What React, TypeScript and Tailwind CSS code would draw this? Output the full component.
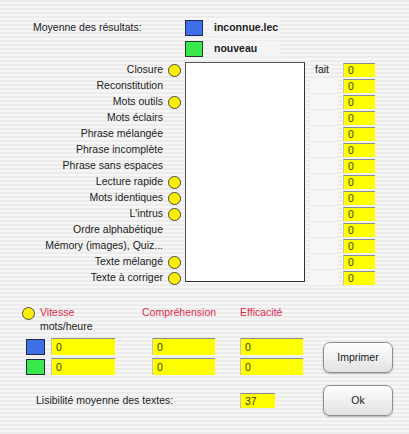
import React from "react";

const exercises: { name: string; dot: boolean }[] = [
  { name: "Closure", dot: true },
  { name: "Reconstitution", dot: false },
  { name: "Mots outils", dot: true },
  { name: "Mots éclairs", dot: false },
  { name: "Phrase mélangée", dot: false },
  { name: "Phrase incomplète", dot: false },
  { name: "Phrase sans espaces", dot: false },
  { name: "Lecture rapide", dot: true },
  { name: "Mots identiques", dot: true },
  { name: "L'intrus", dot: true },
  { name: "Ordre alphabétique", dot: false },
  { name: "Mémory (images), Quiz...", dot: false },
  { name: "Texte mélangé", dot: true },
  { name: "Texte à corriger", dot: true },
];

function Dot() {
  return (
    <span className="block w-[13px] h-[13px] rounded-full bg-[#ffee00] border border-[#4a4a4a]" />
  );
}

function Field({ value, w }: { value: string; w: string }) {
  return (
    <div
      className={`${w} h-full bg-[#ffff00] border-t border-t-[#8c8c8c] border-l border-l-[#c4c4c4] pl-[4px] flex items-center text-[#3a3a00] leading-none`}
    >
      {value}
    </div>
  );
}

function Swatch({ color }: { color: string }) {
  return <span className={`block w-[19px] h-[16px] border border-[#1e2a40] ${color}`} />;
}

function AquaButton({ label }: { label: string }) {
  return (
    <button className="w-[70px] h-[31px] rounded-[7px] border border-[#8e8e8e] bg-[linear-gradient(to_bottom,#ffffff,#f0f0f0_50%,#e2e2e2)] shadow-[0_1px_2px_rgba(0,0,0,0.25)] text-[#1a1a1a] text-[10.5px]">
      {label}
    </button>
  );
}

export default function App() {
  return (
    <div className="w-[409px] h-[434px] overflow-hidden bg-[image:repeating-linear-gradient(to_bottom,#ececec_0px,#ececec_2px,#f6f6f6_2px,#f6f6f6_4px)] font-['Liberation_Sans',Arial,sans-serif] text-[10.5px] text-[#222] pt-[20px]">
      {/* en-tête */}
      <div className="flex items-center h-[16px] pl-[33px]">
        <span className="w-[152px]">Moyenne des résultats:</span>
        <span className="block w-[18px] h-[16px] bg-[#3f6fe8] border border-[#1e2a50]" />
        <span className="ml-[6px] pl-[5px] w-[72px] h-[16px] flex items-center bg-[#f4f4f4] font-bold">
          inconnue.lec
        </span>
      </div>
      <div className="flex items-center h-[16px] pl-[185px] mt-[5px]">
        <span className="block w-[18px] h-[16px] bg-[#38e84c] border border-[#1e4020]" />
        <span className="ml-[6px] pl-[5px] w-[72px] h-[16px] flex items-center bg-[#f4f4f4] font-bold">
          nouveau
        </span>
      </div>

      {/* exercices */}
      <div className="flex mt-[5px]">
        <div className="w-[185px] flex flex-col">
          {exercises.map((e) => (
            <div key={e.name} className="h-[16px] flex items-center justify-end pr-[4px]">
              <span className="whitespace-nowrap">{e.name}</span>
              <span className="ml-[5px] w-[13px]">{e.dot && <Dot />}</span>
            </div>
          ))}
        </div>
        <div className="w-[120px] h-[220px] bg-white border border-[#555] border-r-[#333] border-b-[#333]" />
        <div className="w-[38px] flex flex-col">
          {exercises.map((e, i) => (
            <div key={e.name} className="h-[16px] flex items-center">
              {i === 0 ? (
                <span className="pl-[10px]">fait</span>
              ) : (
                <span className="block ml-[5px] w-[28px] h-[14px] bg-[#f7f7f7]" />
              )}
            </div>
          ))}
        </div>
        <div className="w-[32px] flex flex-col">
          {exercises.map((e) => (
            <div key={e.name} className="h-[16px] flex items-center">
              <div className="h-[14px]">
                <Field value="0" w="w-[32px]" />
              </div>
            </div>
          ))}
        </div>
      </div>

      {/* résultats */}
      <div className="flex mt-[20px]">
        <div className="w-[323px]">
          <div className="h-[14px] flex items-center pl-[22px] text-[#e0284a]">
            <span className="w-[18px]">
              <Dot />
            </span>
            <span className="w-[102px]">Vitesse</span>
            <span className="w-[98px]">Compréhension</span>
            <span>Efficacité</span>
          </div>
          <div className="h-[14px] flex items-center pl-[40px]">mots/heure</div>
          {["bg-[#3f6fe8]", "bg-[#38e84c]"].map((c, i) => (
            <div
              key={c}
              className={`h-[17px] flex items-center pl-[26px] ${i === 0 ? "mt-[4px]" : "mt-[3px]"}`}
            >
              <Swatch color={c} />
              <div className="ml-[6px] h-[17px]">
                <Field value="0" w="w-[64px]" />
              </div>
              <div className="ml-[37px] h-[17px]">
                <Field value="0" w="w-[63px]" />
              </div>
              <div className="ml-[25px] h-[17px]">
                <Field value="0" w="w-[63px]" />
              </div>
            </div>
          ))}
          <div className="h-[15px] flex items-center pl-[36px] mt-[18px]">
            <span className="w-[204px]">Lisibilité moyenne des textes:</span>
            <div className="h-[15px]">
              <Field value="37" w="w-[35px]" />
            </div>
          </div>
        </div>
        <div className="flex flex-col gap-[12px] pt-[36px]">
          <AquaButton label="Imprimer" />
          <AquaButton label="Ok" />
        </div>
      </div>
    </div>
  );
}
